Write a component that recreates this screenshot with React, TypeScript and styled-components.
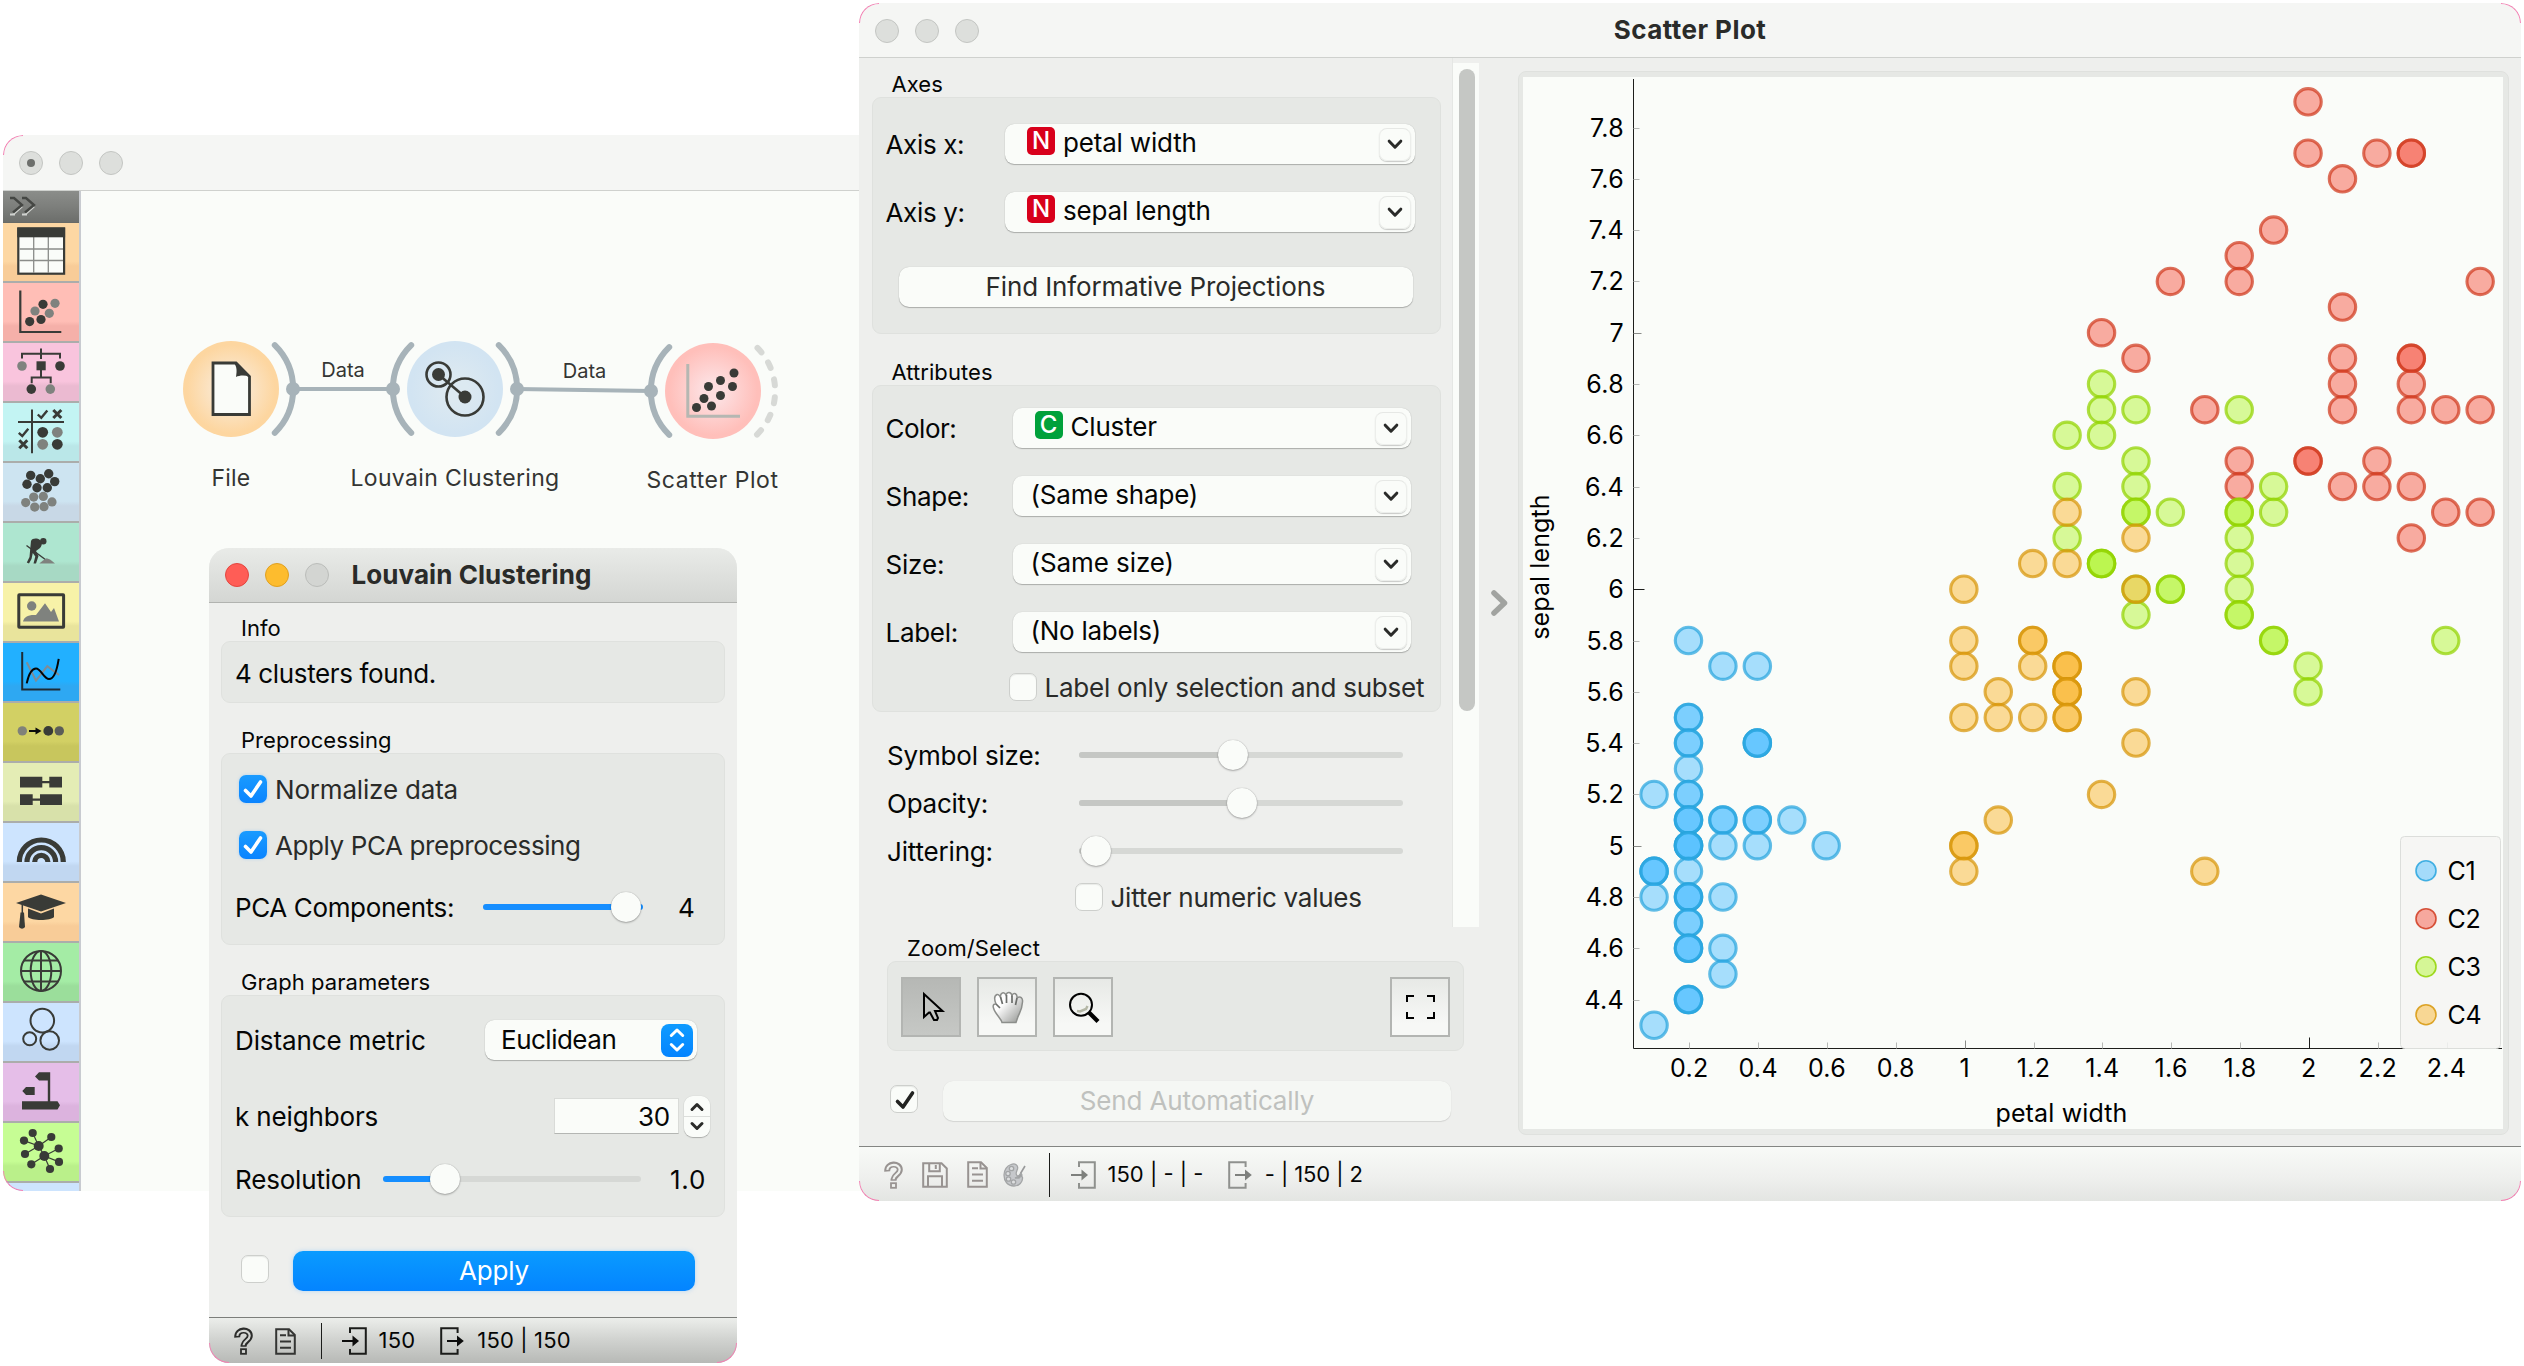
import React from "react";
import styled, { createGlobalStyle, css } from "styled-components";

const INK = "#393b37";
const GREY = "#7f827e";
const PAPER = "#fafcf9";

const GlobalStyle = createGlobalStyle`
  *, *::before, *::after { box-sizing: border-box; }
  body {
    margin: 0;
    background: #fff;
    color: #050605;
    font-family: Inter, "Liberation Sans", sans-serif;
    font-size: 26px;
    line-height: 1;
    letter-spacing: -0.18px;
  }
`;

const Desktop = styled.main`
  position: relative;
  width: 2524px;
  height: 1366px;
  overflow: hidden;
`;

/* ---------- windows ---------- */

const Window = styled.section<{ $x: number; $y: number; $w: number; $h: number; $bg?: string }>`
  position: absolute;
  left: ${p => p.$x}px;
  top: ${p => p.$y}px;
  width: ${p => p.$w}px;
  height: ${p => p.$h}px;
  display: flex;
  flex-direction: column;
  border-radius: 20px;
  overflow: hidden;
  background: ${p => p.$bg || "#eeefed"};
`;

const cornerSides = {
  tl: css`top: 0; left: 0; border-width: 1px 0 0 1px; border-top-left-radius: 20px;`,
  tr: css`top: 0; right: 0; border-width: 1px 1px 0 0; border-top-right-radius: 20px;`,
  bl: css`bottom: 0; left: 0; border-width: 0 0 1px 1px; border-bottom-left-radius: 20px;`,
  br: css`bottom: 0; right: 0; border-width: 0 1px 1px 0; border-bottom-right-radius: 20px;`,
};

const Corner = styled.i<{ $at: keyof typeof cornerSides }>`
  position: absolute;
  width: 20px;
  height: 20px;
  border: 0 solid #f57fb3;
  ${p => cornerSides[p.$at]}
`;

const TitleBar = styled.header<{ $active?: boolean; $h?: number }>`
  flex: none;
  height: ${p => p.$h || 55}px;
  display: grid;
  grid-template-columns: 1fr auto 1fr;
  align-items: center;
  padding: 0 16px;
  border-bottom: 1px solid ${p => (p.$active ? "#b1b3b0" : "#cfd1ce")};
  background: ${p => (p.$active ? "linear-gradient(#e9ebe8, #d4d6d3)" : "#f5f6f4")};
`;

const Lights = styled.div<{ $pt?: number }>`
  display: flex;
  gap: 16px;
  padding-top: ${p => p.$pt || 0}px;
`;

const Light = styled.span<{ $fill?: string; $edge?: string; $dot?: boolean }>`
  width: 24px;
  height: 24px;
  display: grid;
  place-items: center;
  border-radius: 50%;
  border: 1px solid ${p => p.$edge || "#c3c5c2"};
  background: ${p => p.$fill || "#dddfdc"};
  &::after {
    content: "";
    display: ${p => (p.$dot ? "block" : "none")};
    width: 8px;
    height: 8px;
    border-radius: 50%;
    background: #6d6f6c;
  }
`;

const Title = styled.h1<{ $ls?: number; $shift?: number }>`
  margin: 0;
  padding: 0 ${p => p.$shift || 0}px 1px 0;
  font-size: 26px;
  line-height: 32px;
  font-weight: 700;
  color: #2a2b29;
  letter-spacing: ${p => p.$ls || 0}px;
  white-space: nowrap;
`;

/* ---------- shared form parts ---------- */

const GroupLabel = styled.h2<{ $mt?: number; $ml?: number }>`
  margin: ${p => p.$mt || 0}px 0 0 ${p => p.$ml ?? 20}px;
  height: 26px;
  line-height: 26px;
  font-size: 22px;
  font-weight: 400;
  letter-spacing: 0.06px;
`;

const Group = styled.div<{ $h: number; $w: number; $pt?: number; $ml?: number }>`
  width: ${p => p.$w}px;
  height: ${p => p.$h}px;
  margin-left: ${p => p.$ml || 0}px;
  padding: ${p => p.$pt || 0}px 13px 0;
  border: 1px solid #dfe1de;
  border-radius: 9px;
  background: #e6e8e5;
`;

const Row = styled.div<{ $h: number; $pl?: number; $mt?: number; $top?: number }>`
  height: ${p => p.$h}px;
  display: flex;
  align-items: center;
  margin-top: ${p => p.$mt || 0}px;
  padding-left: ${p => p.$pl || 0}px;
  padding-top: ${p => p.$top || 0}px;
`;

const Label = styled.span<{ $w?: number; $ls?: number; $right?: boolean; $soft?: boolean; $ml?: number }>`
  flex: none;
  width: ${p => (p.$w ? `${p.$w}px` : "auto")};
  margin-left: ${p => p.$ml || 0}px;
  padding-top: 2px;
  line-height: 32px;
  white-space: nowrap;
  text-align: ${p => (p.$right ? "right" : "left")};
  letter-spacing: ${p => p.$ls ?? -0.18}px;
  color: ${p => (p.$soft ? "#2a2b29" : "inherit")};
`;

const boxShadow = "0 1px 1px rgba(0,0,0,.24), 0 0 1px rgba(0,0,0,.22)";

const CheckBoxShell = styled.span<{ $on?: boolean; $mb?: number }>`
  flex: none;
  width: 28px;
  height: 28px;
  display: grid;
  place-items: center;
  margin-bottom: ${p => p.$mb || 0}px;
  border-radius: 7px;
  border: ${p => (p.$on ? "0" : "1px solid #cdcfcc")};
  background: ${p => (p.$on ? "linear-gradient(#1a9bff, #0a84ff)" : PAPER)};
  box-shadow: ${p => (p.$on ? "0 0 3px rgba(120,190,255,.5)" : "inset 0 1px 1px rgba(0,0,0,.07)")};
`;

function CheckBox({ on, dark, mb }: { on?: boolean; dark?: boolean; mb?: number }) {
  return (
    <CheckBoxShell $on={on} $mb={mb}>
      {(on || dark) && (
        <svg width="28" height="28" viewBox="0 0 28 28" fill="none">
          <path d="M6.500 15.500 L12 21 L21.500 7" stroke={dark ? "#222321" : "#fff"} strokeWidth="3.600" strokeLinecap="round" strokeLinejoin="round" />
        </svg>
      )}
    </CheckBoxShell>
  );
}

const Button = styled.button<{ $w: number; $primary?: boolean; $disabled?: boolean; $ml?: number; $mt?: number }>`
  display: block;
  flex: none;
  width: ${p => p.$w}px;
  height: 40px;
  margin: ${p => p.$mt || 0}px 0 0 ${p => p.$ml || 0}px;
  padding: 0 0 1px;
  border: 0;
  border-radius: 10px;
  font: inherit;
  font-size: 26px;
  letter-spacing: -0.12px;
  color: ${p => (p.$primary ? "#fff" : p.$disabled ? "#bfc1be" : "#2a2b29")};
  background: ${p => (p.$primary ? "linear-gradient(#0a9bff, #0484ff)" : p.$disabled ? "#f5f7f4" : PAPER)};
  box-shadow: ${p => (p.$primary ? "0 0 4px rgba(120,190,255,.5)" : p.$disabled ? "0 1px 1px rgba(0,0,0,.1), 0 0 1px rgba(0,0,0,.1)" : boxShadow)};
`;

const SelectShell = styled.div<{ $w: number; $pl: number }>`
  flex: none;
  width: ${p => p.$w}px;
  height: 40px;
  display: flex;
  align-items: center;
  justify-content: space-between;
  padding: 0 4px 0 ${p => p.$pl}px;
  border-radius: 9px;
  background: ${PAPER};
  box-shadow: ${boxShadow};
`;

const SelectValue = styled.span<{ $ls?: number; $pb?: number }>`
  display: flex;
  align-items: center;
  gap: 8px;
  padding-bottom: ${p => p.$pb ?? 2}px;
  white-space: nowrap;
  letter-spacing: ${p => p.$ls ?? -0.18}px;
`;

const VarIcon = styled.b<{ $bg: string }>`
  width: 28px;
  height: 28px;
  margin-top: -4px;
  border-radius: 5px;
  background: ${p => p.$bg};
  color: #fff;
  font-size: 24px;
  line-height: 28px;
  font-weight: 500;
  text-align: center;
  letter-spacing: 0;
`;

const DropButton = styled.span`
  width: 32px;
  height: 33px;
  display: grid;
  place-items: center;
  border-radius: 8px;
  border: 1px solid #eceeeb;
  border-top-color: #e6e8e5;
  box-shadow: 0 1px 1px rgba(0,0,0,.2);
`;

const StepperButton = styled.span`
  width: 32px;
  height: 33px;
  display: grid;
  place-items: center;
  border-radius: 8px;
  background: linear-gradient(#0f9bff, #0484ff);
`;

function Select({ w, value, icon, ls }: { w: number; value: string; icon?: [string, string]; ls?: number }) {
  return (
    <SelectShell $w={w} $pl={icon ? 22 : 18}>
      <SelectValue $ls={ls}>
        {icon && <VarIcon $bg={icon[1]}>{icon[0]}</VarIcon>}
        {value}
      </SelectValue>
      <DropButton>
        <svg width="20" height="20" viewBox="0 0 20 20" fill="none">
          <path d="M4.200 7.200 L10 13.200 L15.800 7.200" stroke="#2a2b29" strokeWidth="3" strokeLinecap="round" strokeLinejoin="round" />
        </svg>
      </DropButton>
    </SelectShell>
  );
}

const Track = styled.div<{ $w: number; $ml: number }>`
  position: relative;
  flex: none;
  width: ${p => p.$w}px;
  height: 6px;
  margin-left: ${p => p.$ml}px;
  border-radius: 3px;
  background: #d6d8d5;
`;

const Fill = styled.i<{ $w: number; $color: string }>`
  position: absolute;
  left: 0;
  top: 0;
  width: ${p => p.$w}px;
  height: 6px;
  border-radius: 3px;
  background: ${p => p.$color};
`;

const Knob = styled.i<{ $at: number }>`
  position: absolute;
  top: -12px;
  left: ${p => p.$at - 15}px;
  width: 30px;
  height: 30px;
  border-radius: 50%;
  background: ${PAPER};
  box-shadow: 0 1px 2px rgba(0,0,0,.28), 0 0 1px rgba(0,0,0,.3);
`;

function Slider({ w, ml, at, fill, color = "#c5c7c4" }: { w: number; ml: number; at: number; fill?: number; color?: string }) {
  return (
    <Track $w={w} $ml={ml}>
      <Fill $w={fill ?? at} $color={color} />
      <Knob $at={at} />
    </Track>
  );
}

/* ---------- status bar ---------- */

const StatusBar = styled.footer<{ $h: number; $dark?: boolean }>`
  flex: none;
  height: ${p => p.$h}px;
  display: flex;
  align-items: center;
  margin-top: auto;
  padding-top: 1px;
  border-top: 1px solid ${p => (p.$dark ? "#7c7e7b" : "#838582")};
  background: ${p => (p.$dark ? "linear-gradient(#eceeeb, #d2d4d1 45%, #b7b9b6)" : "linear-gradient(#f8faf7, #eff0ee 55%, #e3e5e2)")};
`;

const Slot = styled.span<{ $ml: number }>`
  display: flex;
  margin-left: ${p => p.$ml}px;
`;

const Divider = styled.i<{ $ml: number; $h: number }>`
  width: 1px;
  height: ${p => p.$h}px;
  margin-left: ${p => p.$ml}px;
  background: #1b1c1a;
`;

const StatusText = styled.span<{ $ml: number; $ls?: number }>`
  margin: 0 0 2px ${p => p.$ml}px;
  font-size: 22px;
  line-height: 26px;
  letter-spacing: ${p => p.$ls || 0}px;
  white-space: nowrap;
`;

type Tint = { color: string; inner: string };

function HelpIcon({ color, inner }: Tint) {
  return (
    <svg width="19" height="28" viewBox="0 0 19 28" fill="none">
      <path d="M3.200 10.500 C2.800 1.600 15.800 1.600 15.800 8.700 C15.800 13.600 9.500 13.400 9.500 19.800" stroke={color} strokeWidth="6" />
      <path d="M3.300 8.900 C3.800 2.300 15.700 2.300 15.700 8.700 C15.700 13.600 9.500 13.400 9.500 18.200" stroke={inner} strokeWidth="2.200" />
      <rect x="7" y="22.200" width="5" height="4.600" stroke={color} strokeWidth="1.800" fill={inner} />
    </svg>
  );
}

function DocIcon({ color }: { color: string }) {
  return (
    <svg width="21" height="27" viewBox="0 0 21 27" fill="none" stroke={color} strokeWidth="2">
      <path d="M1.200 1.200 H14 L19.800 7 V25.800 H1.200 Z" />
      <path d="M13.500 1.200 V7.600 H19.800" />
      <path d="M5 7.200 H11 M5 13.400 H16 M5 19.800 H16" />
    </svg>
  );
}

function SaveIcon({ color }: { color: string }) {
  return (
    <svg width="26" height="26" viewBox="0 0 26 26" fill="none" stroke={color} strokeWidth="2">
      <path d="M1.200 1.200 H19.500 L24.800 6.500 V24.800 H1.200 Z" />
      <path d="M7.200 1.200 V9.200 H17.800 V1.200 M13.800 3 V7 M6 24.800 V14.200 H20 V24.800" />
    </svg>
  );
}

function PaletteIcon() {
  return (
    <svg width="23" height="24" viewBox="0 0 23 24" fill="none" stroke="#a3a5a6" strokeWidth="1.300">
      <path d="M8 1.500 C12 0 15.500 2 14.500 6 C13.500 9 12 11 14 12.500 C16 13.500 19 12 19.500 14.500 C20 19 16 23 11 23 C4.500 23 1 18 1 12 C1 7 4 2.800 8 1.500 Z" fill="#c6c8cb" />
      <circle cx="8.500" cy="5.500" r="2.200" fill="#dddfe0" />
      <circle cx="5" cy="10.500" r="2.200" fill="#dddfe0" />
      <circle cx="5.500" cy="16" r="2.200" fill="#dddfe0" />
      <circle cx="10.500" cy="19" r="2.200" fill="#dddfe0" />
      <path d="M22 3 L17.500 10.500" stroke="#98999a" strokeWidth="1.600" />
      <path d="M18 10 L15.800 13 L12 15 L16 15 L19 12 Z" fill="#98999a" />
    </svg>
  );
}

function InIcon({ color, arrow }: { color: string; arrow: string }) {
  return (
    <svg width="26" height="28" viewBox="0 0 26 28" fill="none">
      <path d="M8 6 V1.200 H23.800 V26.800 H8 V22" stroke={color} strokeWidth="2" />
      <path d="M0 14 H12" stroke={arrow} strokeWidth="2" />
      <path d="M10.500 8.600 L17 14 L10.500 19.400 Z" fill={arrow} />
    </svg>
  );
}

function OutIcon({ color, arrow }: { color: string; arrow: string }) {
  return (
    <svg width="25" height="28" viewBox="0 0 25 28" fill="none">
      <path d="M17.600 6 V1.200 H1.200 V26.800 H17.600 V22" stroke={color} strokeWidth="2" />
      <path d="M7 14 H18" stroke={arrow} strokeWidth="2" />
      <path d="M17 8.600 L23.800 14 L17 19.400 Z" fill={arrow} />
    </svg>
  );
}

/* ---------- workflow window ---------- */

const WorkArea = styled.div`
  flex: 1;
  display: flex;
  min-height: 0;
`;

const Sidebar = styled.nav`
  flex: none;
  width: 78px;
  border-right: 2px solid #c8cbd0;
  overflow: hidden;
`;

const Expander = styled.div`
  height: 32px;
  padding: 3px 0 0 6px;
  border-bottom: 1px solid #686a67;
  background: linear-gradient(#8b8d8a, #7d7f7c 50%, #6c6e6b);
`;

const Category = styled.div<{ $top: string; $bottom: string }>`
  height: 60px;
  border-bottom: 2px solid #abadab;
  background: linear-gradient(${p => p.$top} 66%, ${p => p.$bottom} 74%);
`;

const dots = (list: number[][], r: number, fill: string) =>
  list.map(([x, y]) => <circle key={`${x}-${y}`} cx={x} cy={y} r={r} fill={fill} />);

const check = (x: number, y: number) => (
  <path d={`M${x - 4.5} ${y + 0.5} L${x - 1} ${y + 3.8} L${x + 5} ${y - 3.5}`} stroke={INK} strokeWidth="2.400" fill="none" />
);
const cross = (x: number, y: number) => (
  <path d={`M${x - 4} ${y - 4} L${x + 4} ${y + 4} M${x + 4} ${y - 4} L${x - 4} ${y + 4}`} stroke={INK} strokeWidth="3" fill="none" />
);

const HUBS = [[35.7, 23], [41.3, 33]];
const LEAVES_A = [[29.7, 10], [48.3, 14], [21, 17.6], [22, 31]];
const LEAVES_B = [[55.7, 25.5], [28.3, 41.3], [56, 38.9], [47, 46]];

const CATEGORIES: { top: string; bottom: string; icon?: React.ReactNode }[] = [
  {
    top: "#fdd7a3", bottom: "#f8cc98",
    icon: (
      <>
        <rect x="15.300" y="5.500" width="45.800" height="45.200" fill={PAPER} stroke={INK} strokeWidth="2.200" />
        <path d="M30.700 14 V50 M45.300 14 V50 M16.500 26 H60 M16.500 37.500 H60" stroke="#8a8c89" strokeWidth="1.300" />
        <rect x="14.300" y="4.500" width="47.800" height="9.800" fill={INK} />
      </>
    ),
  },
  {
    top: "#ffbeb6", bottom: "#f5b0a9",
    icon: (
      <>
        <path d="M17.300 7.600 V49 H58.300" stroke={INK} strokeWidth="2.200" fill="none" />
        {dots([[40, 21.3], [26.7, 38.6], [38, 36.5]], 4.6, INK)}
        {dots([[52, 20.3], [32, 28], [46.3, 30.3]], 4.6, GREY)}
      </>
    ),
  },
  {
    top: "#f9c4dd", bottom: "#ebbad1",
    icon: (
      <>
        <path d="M38 5.500 V16 M19 15.500 V10.700 H57 V15.500 M38 27 V34.400 M28.700 40.300 V34.400 H47.700 V40.300" stroke={INK} strokeWidth="2" fill="none" />
        <rect x="33.500" y="18.300" width="9.200" height="9" fill={INK} />
        {dots([[57, 23], [28.3, 46.1]], 4.8, INK)}
        {dots([[19, 23], [47.3, 46.1]], 4.8, GREY)}
      </>
    ),
  },
  {
    top: "#c3f4f3", bottom: "#bae7e8",
    icon: (
      <>
        <path d="M29 6.500 V50.300 M15 19 H61" stroke={INK} strokeWidth="2" />
        {check(39.3, 11)}{cross(54.3, 11)}{check(20.3, 29.3)}{cross(20.3, 41.3)}
        {dots([[39.7, 29.3], [54.3, 41.3]], 5.4, INK)}
        {dots([[54.3, 29.3], [39.7, 41.3]], 5.4, GREY)}
      </>
    ),
  },
  {
    top: "#cde4f1", bottom: "#c8d8e6",
    icon: (
      <>
        {dots([[27.7, 12.4], [45.7, 10.7], [37.3, 15.8], [24, 21.3], [51.7, 18.6], [34, 24.8], [44.3, 24.8]], 4.7, INK)}
        {dots([[30.7, 34.1], [40.3, 33.4], [22.7, 39.6], [49, 38.9], [31.7, 44.1], [41, 43.7]], 4.6, GREY)}
      </>
    ),
  },
  {
    top: "#aee6d0", bottom: "#a7d9c4",
    icon: (
      <>
        <circle cx="40.300" cy="18.300" r="3.200" fill={INK} />
        <path d="M28 18 C29.500 15 34 15 37 17 C39.500 19 39.500 22 37 25 L33 28 L35.500 33 L33 40.600 L30.500 40.600 L32.300 33.500 L29.800 30 L28.500 36 L26 40.600 L23.800 39.500 L26.500 34 L27.300 25 Z" fill={INK} />
        <path d="M23.500 22.500 L43 37" stroke={INK} strokeWidth="1.400" />
        <path d="M36.300 40.600 L40 37.500 L43.700 35.300 L47 36.500 L49 38 L52 40.600 Z" fill={GREY} />
      </>
    ),
  },
  {
    top: "#f7f2a8", bottom: "#e9e49c",
    icon: (
      <>
        <rect x="15.800" y="11.800" width="44.800" height="32.400" rx="0.500" fill="none" stroke={INK} strokeWidth="3" />
        <circle cx="28.700" cy="23" r="4.700" fill={GREY} />
        <path d="M20 38.600 C21 34 25 31.500 33 32 L42 20.300 L48 29 L51 25 L56 38.600 Z" fill={GREY} />
      </>
    ),
  },
  {
    top: "#22b0ff", bottom: "#2ea8f2",
    icon: (
      <g fill="none" strokeWidth="2">
        <path d="M23.700 19.300 L33 37.700 L44.300 23.200 L56 32" stroke="#7f8c96" />
        <path d="M19.200 9 V46.600 H57.300" stroke="#1d2b36" />
        <path d="M23.700 40.400 C26 30 29 25.600 33 25.600 C38 25.600 41 36 46 36 C51 36 54 27 55.700 15.800" stroke="#050505" />
      </g>
    ),
  },
  {
    top: "#d2d064", bottom: "#c8c65d",
    icon: (
      <>
        <circle cx="19.300" cy="27.900" r="4.700" fill="#808279" />
        <path d="M26 28 H34" stroke="#0b0b0b" strokeWidth="2" />
        <path d="M32.500 24.500 L38.500 28 L32.500 31.500 Z" fill="#0b0b0b" />
        <circle cx="45.300" cy="27.900" r="4.900" fill={INK} />
        <circle cx="56.300" cy="27.900" r="4.700" fill="#5b5d58" />
      </>
    ),
  },
  {
    top: "#e4edb5", bottom: "#d8e1aa",
    icon: (
      <path d="M17 13.800 H39.300 V18 H46.300 V13.800 H59 V24.500 H46.300 V20.300 H39.300 V24.500 H17 Z M17 31.300 H29.700 V35.500 H37 V31.300 H59 V42 H37 V37.800 H29.700 V42 H17 Z" fill={INK} />
    ),
  },
  {
    top: "#cde4fe", bottom: "#c1d7f1",
    icon: (
      <g fill="none" stroke={INK} strokeWidth="5.200">
        <path d="M16.300 39 A22 22 0 0 1 60.300 39" />
        <path d="M24 39 A14.300 14.300 0 0 1 52.600 39" />
        <path d="M31.700 39 A6.600 6.600 0 0 1 44.900 39" />
      </g>
    ),
  },
  {
    top: "#fdd7a3", bottom: "#f8cc98",
    icon: (
      <>
        <path d="M13 20 L38 11.400 L63 20 L38 28.600 Z" fill={INK} />
        <path d="M25 25.500 L38 30.500 L51 25.500 V34 C48 38 28 38 25 34 Z" fill={INK} />
        <path d="M19.300 21.500 V31" stroke={INK} strokeWidth="1.500" />
        <path d="M17.500 29.500 L21 29.500 L22 44 C20 46.300 18 46.300 16 44 Z" fill={INK} />
      </>
    ),
  },
  {
    top: "#a4eca5", bottom: "#9bde9b",
    icon: (
      <g fill="none" stroke={INK} strokeWidth="2">
        <circle cx="38" cy="27.900" r="20" />
        <ellipse cx="38" cy="27.900" rx="10.300" ry="20" />
        <path d="M38 8 V48 M18 27.900 H58 M21 17.600 H55 M21 38.600 H55" />
      </g>
    ),
  },
  {
    top: "#cde4fe", bottom: "#c1d7f1",
    icon: (
      <g fill="none" stroke={INK} strokeWidth="2">
        <circle cx="39.300" cy="17.600" r="11.800" />
        <circle cx="26.700" cy="35.800" r="6.500" />
        <circle cx="46.700" cy="37.500" r="9.300" />
      </g>
    ),
  },
  {
    top: "#e5bee8", bottom: "#dcb3de",
    icon: (
      <path d="M32 13.400 L36 9.300 H47.200 V38.200 H54.500 L57 42.300 L54.500 46.500 H19 V38.200 H44.800 V17.600 H36 Z M19.300 28 L23 24 H31.700 V32 H23 Z" fill={INK} />
    ),
  },
  {
    top: "#c6fd94", bottom: "#baf08a",
    icon: (
      <>
        <g stroke={INK} strokeWidth="1.200">
          {LEAVES_A.map(([x, y]) => <line key={x} x1={HUBS[0][0]} y1={HUBS[0][1]} x2={x} y2={y} />)}
          {LEAVES_B.map(([x, y]) => <line key={x} x1={HUBS[1][0]} y1={HUBS[1][1]} x2={x} y2={y} />)}
          <line x1="35.700" y1="23" x2="41.300" y2="33" />
        </g>
        {dots(HUBS, 5, INK)}
        {dots([...LEAVES_A, ...LEAVES_B], 4.1, INK)}
      </>
    ),
  },
  { top: "#cde4fe", bottom: "#c1d7f1" },
];

const Canvas = styled.div`
  position: relative;
  flex: 1;
  background: ${PAPER};
`;

const Links = styled.svg`
  position: absolute;
  inset: 0;
`;

const NodeDisc = styled.div<{ $x: number; $y: number; $edge: string; $core: string }>`
  position: absolute;
  left: ${p => p.$x - 48}px;
  top: ${p => p.$y - 48}px;
  width: 96px;
  height: 96px;
  border-radius: 50%;
  display: grid;
  place-items: center;
  background: radial-gradient(circle closest-side, ${p => p.$core} 25%, ${p => p.$edge} 92%);
`;

const Caption = styled.span<{ $x: number; $y: number; $size: number; $ls?: number }>`
  position: absolute;
  left: ${p => p.$x}px;
  top: ${p => p.$y - 15}px;
  transform: translateX(-50%);
  font-size: ${p => p.$size}px;
  line-height: 30px;
  letter-spacing: ${p => p.$ls || 0}px;
  color: #343533;
  white-space: nowrap;
`;

const ARC_R = 61.5;
const ARC_D = 43.8;
const arcPath = (x: number, y: number, side: 1 | -1) =>
  `M${x + side * ARC_D} ${y - ARC_D} A${ARC_R} ${ARC_R} 0 0 ${side === 1 ? 1 : 0} ${x + side * ARC_D} ${y + ARC_D}`;

function Workflow() {
  const file = [150, 198];
  const louvain = [374, 198];
  const scatter = [632, 200];
  return (
    <Canvas>
      <Links width="780" height="1000" viewBox="0 0 780 1000" fill="none" stroke="#a7b3b9" strokeWidth="6" strokeLinecap="round">
        <path d={arcPath(file[0], file[1], 1)} />
        <path d={arcPath(louvain[0], louvain[1], -1)} />
        <path d={arcPath(louvain[0], louvain[1], 1)} />
        <path d={arcPath(scatter[0], scatter[1], -1)} />
        <path d={arcPath(scatter[0], scatter[1], 1)} stroke="#d7d9d6" strokeDasharray="6 12" strokeDashoffset="-1" />
        <path d="M212 198 H312 M436 198 L570 200" strokeWidth="4" strokeLinecap="butt" />
        <g fill="#a7b3b9" stroke="none">
          <circle cx="212" cy="198" r="7" />
          <circle cx="312" cy="198" r="7" />
          <circle cx="436" cy="198" r="7" />
          <circle cx="570" cy="200" r="7" />
        </g>
      </Links>
      <NodeDisc $x={150} $y={198} $edge="#fdd6a0" $core="#fae9d3">
        <svg width="96" height="96" viewBox="0 0 96 96">
          <path d="M30 22 H53 L66.500 35.500 V73.500 H30 Z" fill={PAPER} stroke={INK} strokeWidth="2.800" />
          <path d="M53 22 L66.500 35.500 C61 34 56 34.500 53 36 C54 30 54 26 51 22 Z" fill={INK} />
        </svg>
      </NodeDisc>
      <NodeDisc $x={374} $y={198} $edge="#d2e4f2" $core="#dce9f1">
        <svg width="96" height="96" viewBox="0 0 96 96" fill="none" stroke={INK} strokeWidth="2.600">
          <circle cx="31.500" cy="33.500" r="12" />
          <circle cx="58" cy="56" r="18.500" />
          <path d="M31.500 33.500 L58 56" />
          <circle cx="31.500" cy="33.500" r="6.500" fill={INK} stroke="none" />
          <circle cx="58" cy="56" r="6.500" fill={INK} stroke="none" />
        </svg>
      </NodeDisc>
      <NodeDisc $x={632} $y={200} $edge="#ffbfba" $core="#fdddde">
        <svg width="96" height="96" viewBox="0 0 96 96">
          <path d="M22.800 21 V73.300 H75" fill="none" stroke="#b5b7b2" strokeWidth="3" />
          {dots([[31.5, 64.5], [39, 55.5], [46.5, 63], [43.5, 43.5], [55.5, 52.5], [55.5, 37.5], [67.5, 43.5], [69, 30]], 4.5, INK)}
        </svg>
      </NodeDisc>
      <Caption $x={262} $y={178.5} $size={20}>Data</Caption>
      <Caption $x={503.5} $y={179.5} $size={20}>Data</Caption>
      <Caption $x={150} $y={287} $size={23} $ls={0.2}>File</Caption>
      <Caption $x={374} $y={287} $size={23} $ls={0.35}>Louvain Clustering</Caption>
      <Caption $x={631.5} $y={288.5} $size={23} $ls={0.55}>Scatter Plot</Caption>
    </Canvas>
  );
}

function WorkflowWindow() {
  return (
    <Window $x={3} $y={135} $w={900} $h={1056} $bg={PAPER}>
      <TitleBar $h={56}>
        <Lights $pt={1}><Light $dot /><Light /><Light /></Lights>
      </TitleBar>
      <WorkArea>
        <Sidebar>
          <Expander>
            <svg width="28" height="20" viewBox="0 0 28 20" fill="none">
              <path d="M4 18.500 L13 10.500 M1 18.500 H6 M16 18.500 L25 10.500 M13 18.500 H18" stroke="#d0d2cf" strokeWidth="2.200" />
              <path d="M1 2 H5 L13 9 L4 16.500 M13 2 H17 L25 9 L16 16.500" stroke="#454744" strokeWidth="2.400" />
            </svg>
          </Expander>
          {CATEGORIES.map((c, i) => (
            <Category key={i} $top={c.top} $bottom={c.bottom}>
              <svg width="76" height="58" viewBox="0 0 76 58">{c.icon}</svg>
            </Category>
          ))}
        </Sidebar>
        <Workflow />
      </WorkArea>
      <Corner $at="tl" />
      <Corner $at="bl" />
    </Window>
  );
}

/* ---------- Louvain Clustering window ---------- */

const LouvainBody = styled.div`
  padding: 12px 12px 0;
`;

const Spring = styled.span`
  flex: 1;
`;

const SpinField = styled.span`
  width: 125px;
  height: 36px;
  padding-right: 8px;
  line-height: 36px;
  text-align: right;
  background: ${PAPER};
  border: 1px solid #d9dbd8;
  border-bottom-color: #b4b6b3;
`;

const Spinner = styled.span`
  width: 26px;
  height: 41px;
  margin: 0 1px 0 5px;
  display: grid;
  place-items: center;
  border-radius: 9px;
  background: linear-gradient(${PAPER} 48%, #dcdedb 48% 51%, ${PAPER} 51%);
  box-shadow: ${boxShadow};
`;

function LouvainWindow() {
  return (
    <Window $x={209} $y={548} $w={528} $h={815}>
      <TitleBar $active>
        <Lights>
          <Light $fill="#ff5d56" $edge="#e2463f" />
          <Light $fill="#fdbc2e" $edge="#e0a020" />
          <Light $fill="#d3d5d2" $edge="#bbbdba" />
        </Lights>
        <Title $ls={0.05} $shift={3}>Louvain Clustering</Title>
      </TitleBar>
      <LouvainBody>
        <GroupLabel>Info</GroupLabel>
        <Group $w={504} $h={62}>
          <Row $h={62}><Label $ls={-0.37}>4 clusters found.</Label></Row>
        </Group>
        <GroupLabel $mt={24}>Preprocessing</GroupLabel>
        <Group $w={504} $h={192} $pt={7}>
          <Row $h={56} $pl={4}><CheckBox on /><Label $ml={8} $soft>Normalize data</Label></Row>
          <Row $h={56} $pl={4}><CheckBox on /><Label $ml={8} $ls={-0.4} $soft>Apply PCA preprocessing</Label></Row>
          <Row $h={68}>
            <Label $w={248} $ls={-0.37}>PCA Components:</Label>
            <Slider w={160} ml={0} at={143} fill={160} color="#168eff" />
            <Label $ml={35}>4</Label>
          </Row>
        </Group>
        <GroupLabel $mt={24}>Graph parameters</GroupLabel>
        <Group $w={504} $h={222} $pt={4}>
          <Row $h={80}>
            <Label $w={250} $ls={-0.12}>Distance metric</Label>
            <SelectShell $w={212} $pl={16}>
              <SelectValue $ls={-0.5} $pb={0}>Euclidean</SelectValue>
              <StepperButton>
                <svg width="20" height="26" viewBox="0 0 20 26" fill="none" stroke="#fff" strokeWidth="3" strokeLinecap="round" strokeLinejoin="round">
                  <path d="M4.300 8.500 L10 3 L15.700 8.500 M4.300 17.500 L10 23 L15.700 17.500" />
                </svg>
              </StepperButton>
            </SelectShell>
          </Row>
          <Row $h={72}>
            <Label $ls={-0.15}>k neighbors</Label>
            <Spring />
            <SpinField>30</SpinField>
            <Spinner>
              <svg width="16" height="33" viewBox="0 0 16 33" fill="none" stroke="#2a2b29" strokeWidth="3" strokeLinecap="round" strokeLinejoin="round">
                <path d="M3 9.500 L8 4.500 L13 9.500 M3 23.500 L8 28.500 L13 23.500" />
              </svg>
            </Spinner>
          </Row>
          <Row $h={54}>
            <Label $w={148}>Resolution</Label>
            <Slider w={258} ml={0} at={62} color="#168eff" />
            <Label $w={65} $ls={0.7} $right>1.0</Label>
          </Row>
        </Group>
        <Row $h={40} $mt={34} $pl={20}>
          <CheckBox mb={4} />
          <Button $w={402} $primary $ml={24}>Apply</Button>
        </Row>
      </LouvainBody>
      <StatusBar $h={46} $dark>
        <Slot $ml={25}><HelpIcon color="#2c2d2b" inner="#d3d5d2" /></Slot>
        <Slot $ml={21.5}><DocIcon color="#343533" /></Slot>
        <Divider $ml={25} $h={36} />
        <Slot $ml={20}><InIcon color="#1b1c1a" arrow="#0c0c0c" /></Slot>
        <StatusText $ml={11} $ls={0.2}>150</StatusText>
        <Slot $ml={25}><OutIcon color="#1b1c1a" arrow="#0c0c0c" /></Slot>
        <StatusText $ml={12} $ls={0.15}>150 | 150</StatusText>
      </StatusBar>
      <Corner $at="bl" />
      <Corner $at="br" />
    </Window>
  );
}

/* ---------- Scatter Plot window ---------- */

const ScatterBody = styled.div`
  flex: 1;
  display: flex;
  min-height: 0;
`;

const Controls = styled.div`
  flex: none;
  width: 620px;
`;

const ScrollArea = styled.div`
  height: 869px;
  display: flex;
`;

const Form = styled.div`
  width: 594px;
  padding: 13px 0 0 12.500px;
  border-right: 1px solid #e5e7e4;
`;

const ScrollTrack = styled.div`
  width: 26px;
  margin-top: 5px;
  padding: 6px 0 0 6px;
  background: ${PAPER};
`;

const ScrollThumb = styled.div`
  width: 16px;
  height: 642px;
  border-radius: 8px;
  background: #c5c7c4;
`;

const Tools = styled.div`
  height: 100%;
  display: flex;
  align-items: center;
  gap: 16px;
  padding-top: 1px;
`;

const Tool = styled.span<{ $on?: boolean }>`
  flex: none;
  width: 60px;
  height: 60px;
  border: 2px solid #b3b5b2;
  background: ${p => (p.$on ? "linear-gradient(#b6b8b5, #c6c8c5)" : "linear-gradient(#e7e9e6, #f7f8f6 80%)")};
`;

const Handle = styled.div`
  flex: none;
  width: 38.500px;
  display: flex;
  align-items: center;
  padding: 2px 0 0 11px;
`;

const PlotFrame = styled.div`
  flex: none;
  width: 991px;
  height: 1064px;
  margin-top: 13px;
  padding: 5px 4.500px;
  border: 1px solid #dfe1de;
  border-radius: 8px;
  background: #e6e8e5;
`;

const PlotSvg = styled.svg`
  display: block;
  background: ${PAPER};
  font-family: Inter, "Liberation Sans", sans-serif;
`;

type Point = [number, number, number?];

const CLUSTERS: { name: string; fill: string; edge: string; points: Point[] }[] = [
  {
    name: "C2", fill: "rgb(246,90,72)", edge: "rgb(208,58,30)",
    points: [
      [2, 7.9], [2, 7.7], [2.2, 7.7], [2.3, 7.7, 2], [2.1, 7.6], [1.9, 7.4], [1.8, 7.3], [1.6, 7.2], [1.8, 7.2], [2.5, 7.2],
      [2.1, 7.1], [1.4, 7], [1.5, 6.9], [2.1, 6.9], [2.3, 6.9, 2], [2.1, 6.8], [2.3, 6.8], [2.1, 6.7], [2.3, 6.7], [2.4, 6.7],
      [2.5, 6.7], [1.7, 6.7], [1.8, 6.5], [2, 6.5, 2], [2.2, 6.5], [1.8, 6.4], [2.1, 6.4], [2.2, 6.4], [2.3, 6.4], [2.4, 6.3],
      [2.5, 6.3], [2.3, 6.2],
    ],
  },
  {
    name: "C3", fill: "rgb(180,245,55)", edge: "rgb(145,210,0)",
    points: [
      [1.4, 6.8], [1.4, 6.7], [1.5, 6.7], [1.8, 6.7], [1.3, 6.6], [1.4, 6.6], [1.5, 6.5], [1.3, 6.4], [1.5, 6.4], [1.9, 6.4],
      [1.5, 6.3, 2], [1.6, 6.3], [1.8, 6.3, 2], [1.9, 6.3], [1.3, 6.2], [1.8, 6.2], [1.4, 6.1, 3], [1.8, 6.1], [1.6, 6, 2],
      [1.8, 6], [1.5, 6], [1.5, 5.9], [1.8, 5.9, 2], [1.9, 5.8, 2], [2, 5.7], [2, 5.6], [2.4, 5.8],
    ],
  },
  {
    name: "C4", fill: "rgb(250,184,52)", edge: "rgb(215,150,10)",
    points: [
      [1.3, 6.3], [1.5, 6.2], [1.2, 6.1], [1.3, 6.1], [1, 6], [1.5, 6], [1, 5.8], [1.2, 5.8, 2], [1, 5.7], [1.2, 5.7],
      [1.3, 5.7, 3], [1.1, 5.6], [1.3, 5.6, 3], [1.5, 5.6], [1, 5.5], [1.1, 5.5], [1.2, 5.5], [1.3, 5.5, 2], [1.5, 5.4],
      [1.4, 5.2], [1.1, 5.1], [1, 5, 2], [1, 4.9], [1.7, 4.9],
    ],
  },
  {
    name: "C1", fill: "rgb(82,192,255)", edge: "rgb(40,165,222)",
    points: [
      [0.2, 5.8], [0.3, 5.7], [0.4, 5.7], [0.2, 5.5, 2], [0.2, 5.4, 2], [0.4, 5.4, 3], [0.2, 5.3], [0.1, 5.2], [0.2, 5.2, 2],
      [0.2, 5.1, 3], [0.3, 5.1, 2], [0.4, 5.1, 2], [0.5, 5.1], [0.2, 5, 4], [0.3, 5], [0.4, 5], [0.6, 5], [0.1, 4.9, 3],
      [0.2, 4.9], [0.1, 4.8], [0.2, 4.8, 3], [0.3, 4.8], [0.2, 4.7, 2], [0.2, 4.6, 3], [0.3, 4.6], [0.3, 4.5], [0.2, 4.4, 3],
      [0.1, 4.3],
    ],
  },
];

const LEGEND = ["C1", "C2", "C3", "C4"].map(n => CLUSTERS.find(c => c.name === n)!);

const AXIS_X = 110.5;
const AXIS_Y = 971.5;
const px = (v: number) => 166.3 + (v - 0.2) * 344.2;
const py = (v: number) => 512.2 + (6 - v) * 256.5;
const X_TICKS = Array.from({ length: 12 }, (_, i) => (i + 1) / 5);
const Y_TICKS = Array.from({ length: 18 }, (_, i) => (22 + i) / 5);

function Plot() {
  return (
    <PlotSvg width="980" height="1052" viewBox="0 0 980 1052">
      {CLUSTERS.map(c => (
        <g key={c.name} fill={c.fill} stroke={c.edge} fillOpacity="0.500" strokeOpacity="0.720" strokeWidth="3.100">
          {c.points.flatMap(([x, y, n = 1]) =>
            Array.from({ length: n }, (_, k) => <circle key={`${x}/${y}/${k}`} cx={px(x) - 0.8} cy={py(y)} r="13.200" />)
          )}
        </g>
      ))}
      <path d={`M${AXIS_X} 2 V${AXIS_Y} H979`} fill="none" stroke="#1d1e1c" strokeWidth="1" />
      {Y_TICKS.map(v => {
        const len = v === 6 ? 11 : v === 5 || v === 7 ? 8 : 6;
        const y = Math.round(py(v)) + 0.5;
        return (
          <g key={v}>
            <line x1={AXIS_X} x2={AXIS_X + len} y1={y} y2={y} stroke={len === 11 ? "#1d1e1c" : len === 8 ? "#8a8c89" : "#b7b9b6"} />
            <text x="101" y={py(v) + 9} textAnchor="end" fontSize="25" letterSpacing="0.300">{v}</text>
          </g>
        );
      })}
      {X_TICKS.map(v => {
        const len = v === 2 ? 11 : v === 1 ? 8 : 6;
        const x = Math.round(px(v)) + 0.5;
        return (
          <g key={v}>
            <line x1={x} x2={x} y1={AXIS_Y} y2={AXIS_Y - len} stroke={len === 11 ? "#1d1e1c" : len === 8 ? "#8a8c89" : "#b7b9b6"} />
            <text x={px(v)} y="1000" textAnchor="middle" fontSize="25" letterSpacing="0.300">{v}</text>
          </g>
        );
      })}
      <text x="538.500" y="1044.500" textAnchor="middle" fontSize="25" letterSpacing="0.150">petal width</text>
      <text transform="translate(25.500 490) rotate(-90)" textAnchor="middle" fontSize="25" letterSpacing="0.100">sepal length</text>
      <rect x="877.500" y="759.500" width="100" height="212" rx="4" fill="#f4f5f3" fillOpacity="0.850" stroke="#dcdedb" />
      {LEGEND.map((c, i) => (
        <g key={c.name}>
          <circle cx="903" cy={793.7 + i * 48} r="10" fill={c.fill} fillOpacity="0.500" stroke={c.edge} strokeOpacity="0.850" strokeWidth="1.600" />
          <text x="924.500" y={802.7 + i * 48} fontSize="25">{c.name}</text>
        </g>
      ))}
    </PlotSvg>
  );
}

const CURSOR_PATH = "M23 17 V40 L28 35.500 H29 L33 43 H36 L37 41 L34 34 H41.500 Z";

function ScatterWindow() {
  const num: [string, string] = ["N", "#d8001b"];
  const cat: [string, string] = ["C", "#00a13b"];
  return (
    <Window $x={859} $y={3} $w={1662} $h={1198}>
      <TitleBar>
        <Lights $pt={1}><Light /><Light /><Light /></Lights>
        <Title $ls={0.45}>Scatter Plot</Title>
      </TitleBar>
      <ScatterBody>
        <Controls>
          <ScrollArea>
            <Form>
              <GroupLabel>Axes</GroupLabel>
              <Group $w={569} $h={237} $pt={12}>
                <Row $h={68}><Label $w={119.5} $ls={-0.35}>Axis x:</Label><Select w={409.5} value="petal width" icon={num} /></Row>
                <Row $h={68}><Label $w={119.5} $ls={-0.35}>Axis y:</Label><Select w={409.5} value="sepal length" icon={num} /></Row>
                <Button $w={514} $ml={13} $mt={21}>Find Informative Projections</Button>
              </Group>
              <GroupLabel $mt={25}>Attributes</GroupLabel>
              <Group $w={569} $h={327} $pt={8}>
                <Row $h={68}><Label $w={127} $ls={-0.5}>Color:</Label><Select w={398} value="Cluster" icon={cat} /></Row>
                <Row $h={68}><Label $w={127} $ls={-0.3}>Shape:</Label><Select w={398} value="(Same shape)" ls={-0.2} /></Row>
                <Row $h={68}><Label $w={127}>Size:</Label><Select w={398} value="(Same size)" ls={-0.08} /></Row>
                <Row $h={68}><Label $w={127} $ls={-0.3}>Label:</Label><Select w={398} value="(No labels)" ls={-0.27} /></Row>
                <Row $h={42} $pl={123}><CheckBox /><Label $ml={8} $ls={-0.24} $soft>Label only selection and subset</Label></Row>
              </Group>
              <Row $h={48} $mt={19} $pl={15.5}><Label $w={192}>Symbol size:</Label><Slider w={324} ml={0} at={154} /></Row>
              <Row $h={48} $pl={15.5}><Label $w={192} $ls={-0.25}>Opacity:</Label><Slider w={324} ml={0} at={163} /></Row>
              <Row $h={48} $pl={15.5}><Label $w={192}>Jittering:</Label><Slider w={324} ml={0} at={17} /></Row>
              <Row $h={44} $pl={203}><CheckBox /><Label $ml={8} $ls={-0.25} $soft>Jitter numeric values</Label></Row>
            </Form>
            <ScrollTrack><ScrollThumb /></ScrollTrack>
          </ScrollArea>
          <GroupLabel $mt={8} $ml={48}>Zoom/Select</GroupLabel>
          <Group $w={577} $h={90} $ml={28}>
            <Tools>
              <Tool $on>
                <svg width="56" height="56" viewBox="2 2 56 56">
                  <path d={CURSOR_PATH} fill="#c4c6c3" stroke="#000" strokeWidth="2" />
                </svg>
              </Tool>
              <Tool>
                <svg width="56" height="56" viewBox="2 2 56 56">
                  <defs>
                    <linearGradient id="palm" x1="0" y1="0" x2="1" y2="1">
                      <stop offset="0.350" stopColor="#fff" />
                      <stop offset="1" stopColor="#8d8f8c" />
                    </linearGradient>
                  </defs>
                  <path
                    d="M25 45.500 C24 41 18 37 16.500 31 C15.500 28 17 26.500 19 27 C17 22 17.500 18.500 20 17.500 C22 17 22.500 19 23.500 20 C23 16 27 14 29 18 C30 14.500 34 14.500 35 18.500 C37 14.500 40.500 17 40 21 C43.500 18.500 46 21 45.500 25 C45 34 42 36 40.500 41 L39 45.500 Z"
                    fill="url(#palm)" stroke="#8c8e8b" strokeWidth="1.500"
                  />
                  <path d="M23.500 20 L25.500 27 M29.500 18 V26 M35 18.500 V26 M40 21 L38.500 28 M19 27 L23 31" stroke="#6c6e6b" strokeWidth="1.700" fill="none" />
                </svg>
              </Tool>
              <Tool>
                <svg width="56" height="56" viewBox="2 2 56 56" fill="none">
                  <circle cx="28" cy="27.700" r="11" stroke="#000" strokeWidth="2" />
                  <path d="M24 34 L27 34.500 L33 32 L34.500 29" stroke="#b4b7a6" strokeWidth="2.500" />
                  <path d="M36 35.500 L45 44.500" stroke="#000" strokeWidth="4.200" />
                </svg>
              </Tool>
              <Spring />
              <Tool>
                <svg width="56" height="56" viewBox="2 2 56 56" fill="none" stroke="#000" strokeWidth="2">
                  <path d="M17 25 V19 H24 M37 19 H44 V25 M44 35 V41 H37 M24 41 H17 V35" />
                </svg>
              </Tool>
            </Tools>
          </Group>
          <Row $h={40} $mt={30} $pl={31}>
            <CheckBox dark mb={4} />
            <Button $w={508} $ml={25} $disabled>Send Automatically</Button>
          </Row>
        </Controls>
        <Handle>
          <svg width="20" height="28" viewBox="0 0 20 28" fill="none">
            <path d="M4 4 L14.500 14 L4 24" stroke="#a1a3a0" strokeWidth="5.500" strokeLinecap="round" strokeLinejoin="round" />
          </svg>
        </Handle>
        <PlotFrame><Plot /></PlotFrame>
      </ScatterBody>
      <StatusBar $h={55}>
        <Slot $ml={25}><HelpIcon color="#989391" inner="#eff1ee" /></Slot>
        <Slot $ml={19}><SaveIcon color="#989391" /></Slot>
        <Slot $ml={19}><DocIcon color="#989391" /></Slot>
        <Slot $ml={15}><PaletteIcon /></Slot>
        <Divider $ml={23} $h={44} />
        <Slot $ml={20.5}><InIcon color="#8f918e" arrow="#7e807d" /></Slot>
        <StatusText $ml={11}>150 | - | -</StatusText>
        <Slot $ml={25}><OutIcon color="#8f918e" arrow="#7e807d" /></Slot>
        <StatusText $ml={11.5} $ls={-0.1}>- | 150 | 2</StatusText>
      </StatusBar>
      <Corner $at="tl" />
      <Corner $at="tr" />
      <Corner $at="bl" />
      <Corner $at="br" />
    </Window>
  );
}

export default function App() {
  return (
    <>
      <GlobalStyle />
      <Desktop>
        <WorkflowWindow />
        <ScatterWindow />
        <LouvainWindow />
      </Desktop>
    </>
  );
}
